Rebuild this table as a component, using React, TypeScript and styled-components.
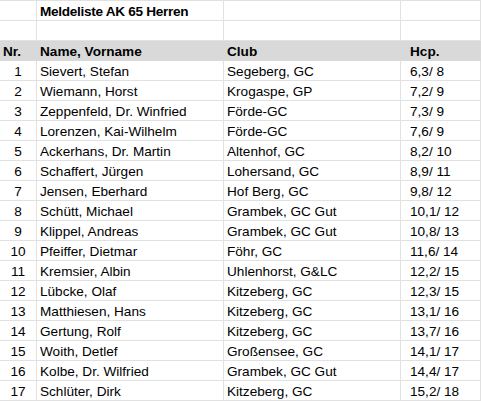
import React from "react";
import styled, { createGlobalStyle } from "styled-components";

const Global = createGlobalStyle`
  html, body { margin: 0; padding: 0; background: #ffffff; }
  body { font-family: "Liberation Sans", Arial, sans-serif; color: #000; }
`;

const Sheet = styled.div`
  display: grid;
  grid-template-columns: 37px 187px 177px 80px;
  grid-auto-rows: 20px;
  width: 481px;
  border-top: 1px solid #e1e1e1;
  font-size: 13.6px;
`;

type CellProps = { $align?: "left" | "center"; $pad?: number; $bold?: boolean; $head?: boolean; $tight?: boolean };

const Cell = styled.div<CellProps>`
  box-sizing: border-box;
  display: flex;
  align-items: center;
  justify-content: ${(p) => (p.$align === "center" ? "center" : "flex-start")};
  padding-left: ${(p) => p.$pad ?? 3}px;
  padding-top: 1px;
  border-right: 1px solid ${(p) => (p.$head ? "#d9d9d9" : "#e1e1e1")};
  border-bottom: 1px solid ${(p) => (p.$head ? "#d9d9d9" : "#e1e1e1")};
  background: ${(p) => (p.$head ? "#d9d9d9" : "#ffffff")};
  font-weight: ${(p) => (p.$bold ? 700 : 400)};
  letter-spacing: ${(p) => (p.$tight ? "-0.3px" : "0")};
  white-space: nowrap;
  overflow: hidden;
`;

const rows: [string, string, string][] = [
  ["Sievert, Stefan", "Segeberg, GC", "6,3/ 8"],
  ["Wiemann, Horst", "Krogaspe, GP", "7,2/ 9"],
  ["Zeppenfeld, Dr. Winfried", "Förde-GC", "7,3/ 9"],
  ["Lorenzen, Kai-Wilhelm", "Förde-GC", "7,6/ 9"],
  ["Ackerhans, Dr. Martin", "Altenhof, GC", "8,2/ 10"],
  ["Schaffert, Jürgen", "Lohersand, GC", "8,9/ 11"],
  ["Jensen, Eberhard", "Hof Berg, GC", "9,8/ 12"],
  ["Schütt, Michael", "Grambek, GC Gut", "10,1/ 12"],
  ["Klippel, Andreas", "Grambek, GC Gut", "10,8/ 13"],
  ["Pfeiffer, Dietmar", "Föhr, GC", "11,6/ 14"],
  ["Kremsier, Albin", "Uhlenhorst, G&LC", "12,2/ 15"],
  ["Lübcke, Olaf", "Kitzeberg, GC", "12,3/ 15"],
  ["Matthiesen, Hans", "Kitzeberg, GC", "13,1/ 16"],
  ["Gertung, Rolf", "Kitzeberg, GC", "13,7/ 16"],
  ["Woith, Detlef", "Großensee, GC", "14,1/ 17"],
  ["Kolbe, Dr. Wilfried", "Grambek, GC Gut", "14,4/ 17"],
  ["Schlüter, Dirk", "Kitzeberg, GC", "15,2/ 18"],
];

export default function App() {
  return (
    <>
      <Global />
      <Sheet>
        <Cell />
        <Cell $bold $tight>Meldeliste AK 65 Herren</Cell>
        <Cell />
        <Cell />

        <Cell />
        <Cell />
        <Cell />
        <Cell />

        <Cell $head $bold $pad={3}>Nr.</Cell>
        <Cell $head $bold>Name, Vorname</Cell>
        <Cell $head $bold>Club</Cell>
        <Cell $head $bold $pad={9}>Hcp.</Cell>

        {rows.map(([name, club, hcp], i) => (
          <React.Fragment key={i}>
            <Cell $align="center" $pad={0}>{i + 1}</Cell>
            <Cell>{name}</Cell>
            <Cell>{club}</Cell>
            <Cell $pad={9}>{hcp}</Cell>
          </React.Fragment>
        ))}
      </Sheet>
    </>
  );
}
